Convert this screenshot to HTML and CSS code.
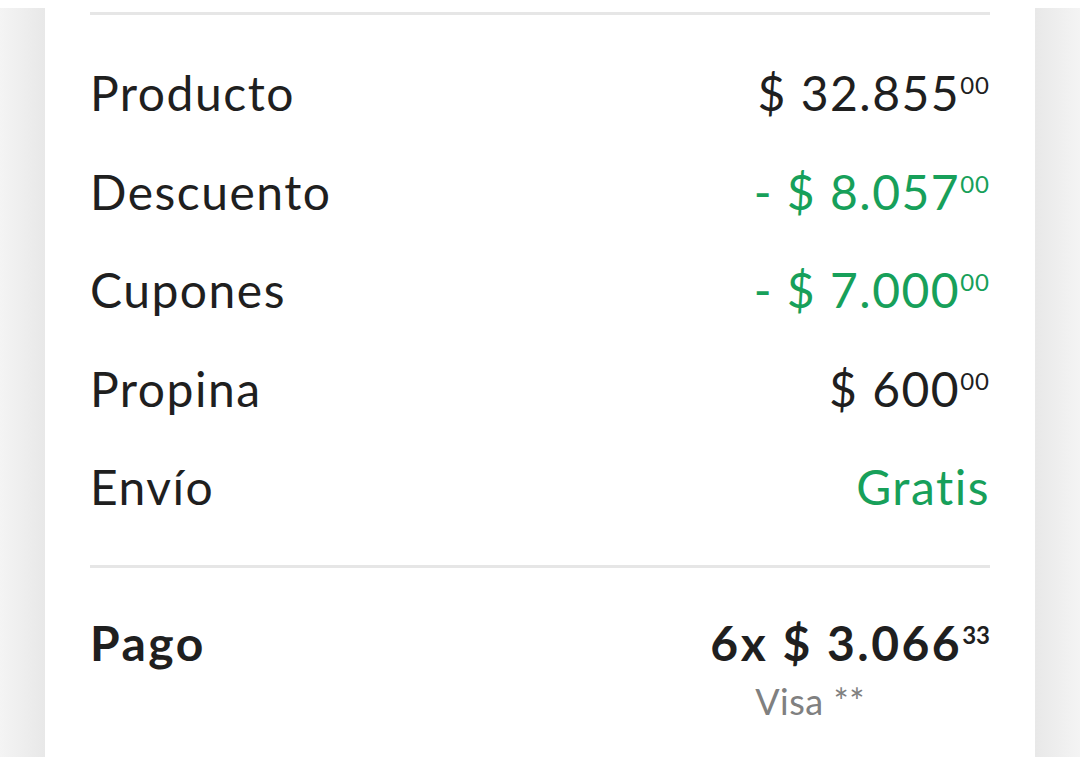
FILE: index.html
```html
<!DOCTYPE html>
<html lang="es">
<head>
    <meta charset="UTF-8">
    <meta name="viewport" content="width=device-width, initial-scale=1.0">
    <title>Resumen de compra</title>
    <link rel="stylesheet" href="styles.css">
</head>
<body>
    <div class="page">
        <div class="side side-left"></div>
        <div class="card">
            <hr class="divider top">

            <div class="rows">
                <div class="row">
                    <span class="label">Producto</span>
                    <span class="amount">$ 32.855<sup>00</sup></span>
                </div>
                <div class="row">
                    <span class="label">Descuento</span>
                    <span class="amount green">- $ 8.057<sup>00</sup></span>
                </div>
                <div class="row">
                    <span class="label">Cupones</span>
                    <span class="amount green">- $ 7.000<sup>00</sup></span>
                </div>
                <div class="row">
                    <span class="label">Propina</span>
                    <span class="amount">$ 600<sup>00</sup></span>
                </div>
                <div class="row">
                    <span class="label">Envío</span>
                    <span class="amount green">Gratis</span>
                </div>
            </div>

            <hr class="divider">

            <div class="payment">
                <div class="row total">
                    <span class="label">Pago</span>
                    <span class="amount">6x $ 3.066<sup>33</sup></span>
                </div>
                <div class="card-info">Visa **</div>
            </div>
        </div>
        <div class="side side-right"></div>
    </div>
</body>
</html>
```

FILE: styles.css
```css
/* Resumen de compra */
body {
    margin: 0;
    padding: 0;
    background-color: #fff;
    font-family: Lato, "Open Sans", sans-serif;
    color: #1f1f1f;
}

.page {
    display: flex;
    margin-top: 8px;
    height: 749px;
}

.side {
    width: 45px;
    flex-shrink: 0;
}

.side-left {
    background: linear-gradient(to right, #f4f4f4, #e8e8e8);
}

.side-right {
    background: linear-gradient(to right, #e8e8e8, #f4f4f4);
}

.card {
    flex: 1;
    background-color: #fff;
    padding: 4px 45px 0;
}

.divider {
    border: none;
    height: 3px;
    background-color: #e6e6e6;
    margin: 0;
}

.rows {
    padding: 29px 0 28px;
}

.row {
    display: flex;
    justify-content: space-between;
    align-items: center;
    height: 98.5px;
    font-size: 48px;
    line-height: 1.2;
    letter-spacing: 1.5px;
}

.amount {
    display: flex;
    align-items: flex-start;
}

.amount sup {
    font-size: 24px;
    line-height: 1.2;
    letter-spacing: 1px;
    vertical-align: baseline;
    margin-top: 7px;
    margin-left: 0;
}

.green {
    color: #17a05a;
}

.payment {
    padding-top: 25px;
}

.total {
    height: 100px;
    font-weight: 700;
    letter-spacing: 2.5px;
}

.total sup {
    font-weight: 700;
    letter-spacing: 0;
}

.card-info {
    text-align: right;
    padding-right: 125px;
    font-size: 36px;
    letter-spacing: 0.5px;
    color: #808080;
    margin-top: -14px;
}
```
